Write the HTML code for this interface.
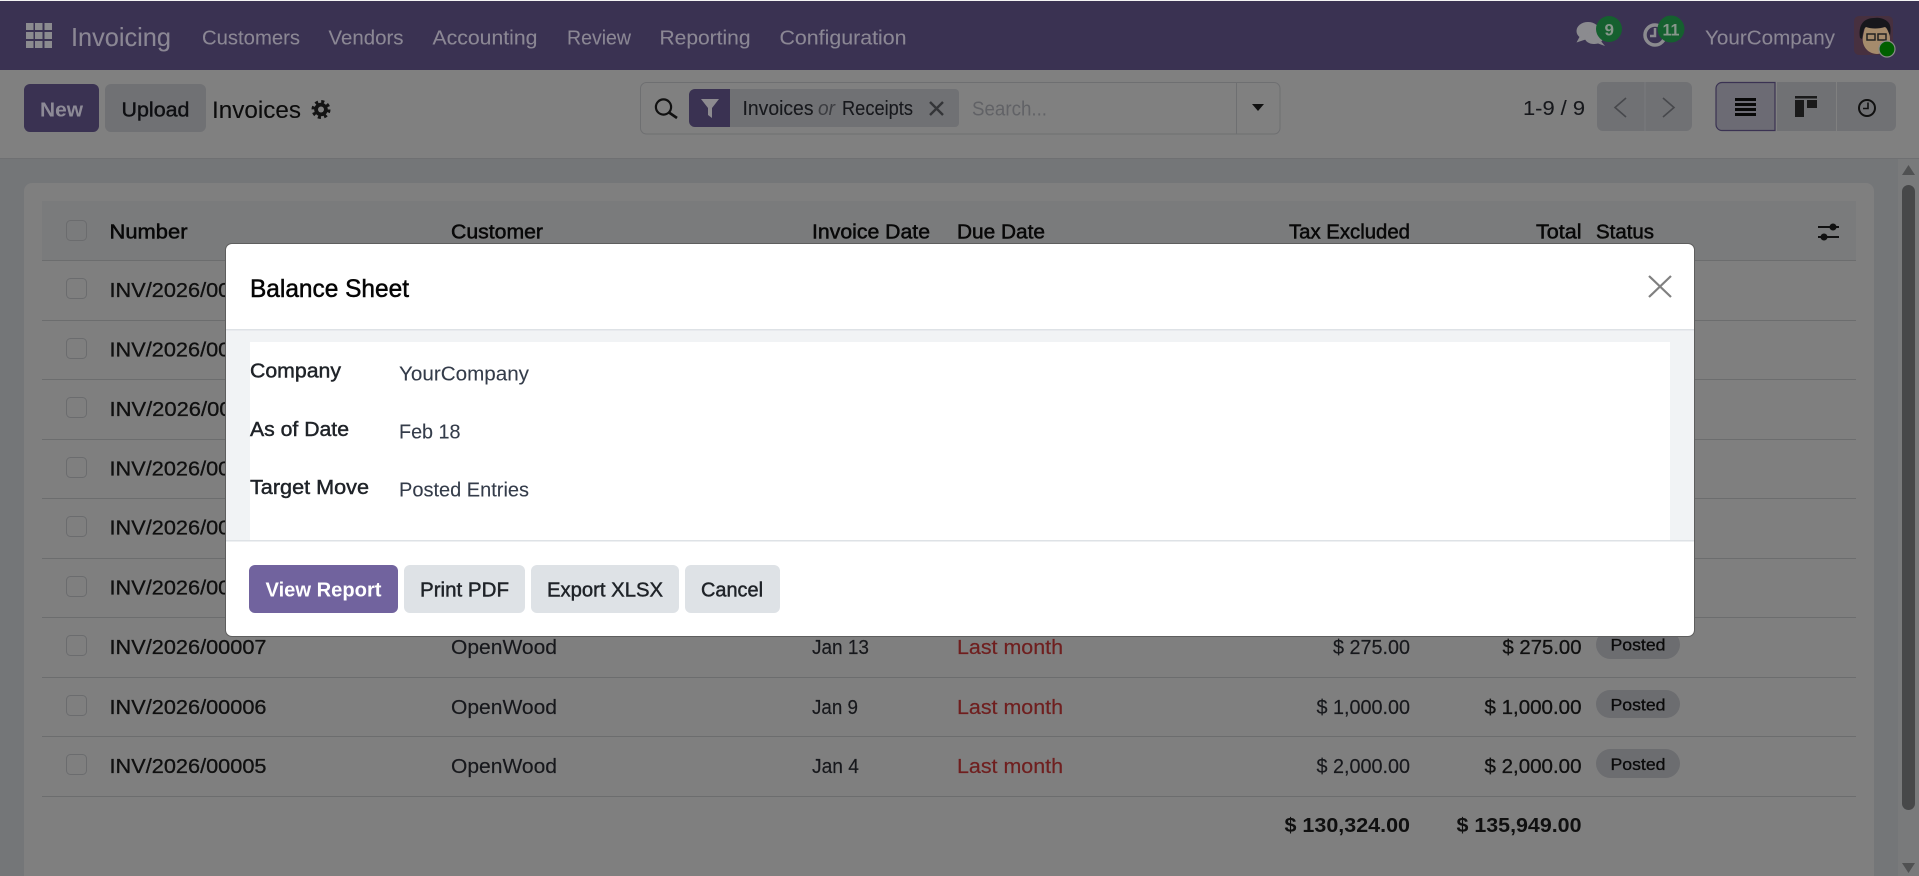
<!DOCTYPE html>
<html lang="en"><head><meta charset="utf-8"><title>Invoices</title>
<style>
html,body{margin:0;padding:0;width:1919px;height:876px;overflow:hidden;background:#747678}
svg{display:block;position:absolute;left:0;top:0}
text{font-family:"Liberation Sans",Arial,sans-serif;font-size:20px;white-space:pre}
.nav{fill:#8b8794;stroke:#8b8794;stroke-width:.1}
.h{fill:#080808;stroke:#080808;stroke-width:.5}
.n{fill:#101010;stroke:#101010;stroke-width:.3}
.r{fill:#17181c;stroke:#17181c;stroke-width:.15}
.d{fill:#6f1f1f;stroke:#6f1f1f;stroke-width:.2}
.b{font-weight:700;fill:#101010}
.p{fill:#0a0a0a;font-size:17px;stroke:#0a0a0a;stroke-width:.3}
.l{fill:#1f2328;stroke:#1f2328;stroke-width:.45}
.v{fill:#343c4a;stroke:#343c4a;stroke-width:.1}
.cb{fill:none;stroke:#6b6c6e;stroke-width:1}
</style></head><body>
<svg width="1919" height="876" viewBox="0 0 1919 876" xmlns="http://www.w3.org/2000/svg">
<rect width="1919" height="876" fill="#747678"/>
<!-- navbar -->
<rect y="0" width="1919" height="1" fill="#f4f4f4"/>
<rect y="1" width="1919" height="69" fill="#3a3252"/>
<!-- grid icon -->
<g fill="#8b8b8f">
<rect x="26" y="23" width="7.5" height="7"/><rect x="35" y="23" width="7.5" height="7"/><rect x="44.500" y="23" width="7.500" height="7"/>
<rect x="26" y="32" width="7.5" height="7"/><rect x="35" y="32" width="7.5" height="7"/><rect x="44.500" y="32" width="7.500" height="7"/>
<rect x="26" y="41" width="7.5" height="7"/><rect x="35" y="41" width="7.5" height="7"/><rect x="44.500" y="41" width="7.500" height="7"/>
</g>
<text x="71" y="46" class="nav" style="font-size:26px" textLength="100" lengthAdjust="spacingAndGlyphs">Invoicing</text>
<text x="202" y="44.500" class="nav" textLength="98" lengthAdjust="spacingAndGlyphs">Customers</text>
<text x="328.500" y="44.500" class="nav" textLength="75" lengthAdjust="spacingAndGlyphs">Vendors</text>
<text x="432.500" y="44.500" class="nav" textLength="105" lengthAdjust="spacingAndGlyphs">Accounting</text>
<text x="567" y="44.500" class="nav" textLength="64" lengthAdjust="spacingAndGlyphs">Review</text>
<text x="659.500" y="44.500" class="nav" textLength="91" lengthAdjust="spacingAndGlyphs">Reporting</text>
<text x="779.500" y="44.500" class="nav" textLength="127" lengthAdjust="spacingAndGlyphs">Configuration</text>
<!-- chat icon -->
<g fill="#8b8b8f">
<ellipse cx="1588" cy="31" rx="11.500" ry="9"/>
<path d="M1580 36l-3.500 6.500 9-3z"/>
<ellipse cx="1594" cy="38" rx="9" ry="6"/>
<path d="M1594 42l11 4-5-6z"/>
</g>
<circle cx="1609" cy="29" r="13" fill="#15602f"/>
<text x="1604.500" y="35.500" style="font-size:17px;font-weight:700;fill:#87968b">9</text>
<!-- activity icon -->
<circle cx="1655" cy="35" r="10" fill="none" stroke="#8b8b8f" stroke-width="3.500"/>
<path d="M1655 28v8h-5" fill="none" stroke="#8b8b8f" stroke-width="2.500"/>
<circle cx="1671" cy="29" r="13.500" fill="#15602f"/>
<text x="1662.500" y="35.500" style="font-size:17px;font-weight:700;fill:#87968b" textLength="17" lengthAdjust="spacingAndGlyphs">11</text>
<text x="1705" y="44.500" class="nav" textLength="130" lengthAdjust="spacingAndGlyphs">YourCompany</text>
<!-- avatar -->
<rect x="1854" y="16" width="39" height="39" rx="5" fill="#47303f"/>
<path d="M1863 36c-2 11 6 18 14 18 8 0 13-7 13-15l-1-12-24 0z" fill="#a58b6c"/>
<path d="M1860 38c-2-12 3-20 14-20 6-1 11 1 14 4 3 3 3 8 2 14-2-5-3-8-5-9-6 2-14 2-19 0-3 2-3 7-4 12z" fill="#17171c"/>
<rect x="1867" y="34" width="8" height="6" fill="none" stroke="#222" stroke-width="1.500"/>
<rect x="1878" y="34" width="8" height="6" fill="none" stroke="#222" stroke-width="1.500"/>
<circle cx="1887" cy="49" r="8" fill="#005f00" stroke="#8a8a8a" stroke-width="1.200"/>
<!-- control panel -->
<rect y="70" width="1919" height="88" fill="#808080"/>
<rect y="158" width="1919" height="1" fill="#6f7072"/>
<rect x="24" y="84" width="75" height="48" rx="6" fill="#3a3252"/>
<text x="40" y="116.500" style="fill:#8d8a96;font-weight:700" textLength="43" lengthAdjust="spacingAndGlyphs">New</text>
<rect x="105" y="84" width="101" height="48" rx="6" fill="#707174"/>
<text x="121.500" y="116.500" style="fill:#0e0f12;stroke:#0e0f12;stroke-width:.4" textLength="68" lengthAdjust="spacingAndGlyphs">Upload</text>
<text x="212" y="118" style="font-size:24px;fill:#0c0c0c;stroke:#0c0c0c;stroke-width:.1" textLength="89" lengthAdjust="spacingAndGlyphs">Invoices</text>
<!-- gear -->
<circle cx="321" cy="109.500" r="6.800" fill="#141414"/>
<circle cx="321" cy="109.500" r="8" fill="none" stroke="#141414" stroke-width="3" stroke-dasharray="3.100 3.180"/>
<circle cx="321" cy="109.500" r="3" fill="#808080"/>
<!-- search -->
<rect x="640.500" y="82.500" width="639.500" height="51.500" rx="6" fill="#808080" stroke="#6e6f71"/>
<line x1="1236.500" y1="82.500" x2="1236.500" y2="134" stroke="#6e6f71"/>
<circle cx="663.500" cy="107" r="7.600" fill="none" stroke="#111" stroke-width="2.200"/>
<line x1="669" y1="112.500" x2="677" y2="118" stroke="#111" stroke-width="2.600"/>
<path d="M689 95a6 6 0 0 1 6-6h260a4 4 0 0 1 4 4v30a4 4 0 0 1-4 4h-260a6 6 0 0 1-6-6z" fill="#707174"/>
<path d="M695 89h35v38h-35a6 6 0 0 1-6-6v-26a6 6 0 0 1 6-6z" fill="#3a3252"/>
<path d="M701 99h18l-7 9v10l-4-3v-7z" fill="#8d8b90"/>
<text x="742.500" y="115" style="fill:#17181c;stroke:#17181c;stroke-width:.1" textLength="71" lengthAdjust="spacingAndGlyphs">Invoices</text>
<text x="818" y="115" style="fill:#3c3d41;font-style:italic" textLength="17" lengthAdjust="spacingAndGlyphs">or</text>
<text x="842" y="115" style="fill:#17181c;stroke:#17181c;stroke-width:.1" textLength="71" lengthAdjust="spacingAndGlyphs">Receipts</text>
<path d="M930 102l13 13M943 102l-13 13" stroke="#343538" stroke-width="2.400"/>
<text x="972" y="115.500" style="fill:#616266" textLength="75" lengthAdjust="spacingAndGlyphs">Search...</text>
<path d="M1252 104h12l-6 7z" fill="#111"/>
<!-- pager -->
<text x="1523" y="115" style="fill:#17181c;stroke:#17181c;stroke-width:.1" textLength="62" lengthAdjust="spacingAndGlyphs">1-9 / 9</text>
<rect x="1597" y="82" width="95" height="49" rx="6" fill="#707174"/>
<line x1="1645" y1="82" x2="1645" y2="131" stroke="#7a7b7e"/>
<path d="M1626 98l-11 9.500 11 9.500M1663 98l11 9.500-11 9.500" fill="none" stroke="#47484c" stroke-width="1.600"/>
<!-- view switch -->
<path d="M1837 82h53a6 6 0 0 1 6 6v37a6 6 0 0 1-6 6h-53z" fill="#707174"/>
<rect x="1777" y="82" width="59" height="49" fill="#707174"/>
<path d="M1775 82.500h-53a6 6 0 0 0-6 6v36a6 6 0 0 0 6 6h53z" fill="#6c6b74" stroke="#3a3252" stroke-width="1.200"/>
<g fill="#080808">
<rect x="1735" y="98" width="21" height="3"/><rect x="1735" y="103" width="21" height="3"/><rect x="1735" y="108" width="21" height="3"/><rect x="1735" y="113" width="21" height="3"/>
<rect x="1795" y="96" width="22" height="2.500" fill="#1a1a1a"/>
<rect x="1795" y="100" width="9" height="17" fill="#1a1a1a"/>
<rect x="1807" y="100" width="10" height="8" fill="#1a1a1a"/>
</g>
<circle cx="1867" cy="108" r="8" fill="none" stroke="#101010" stroke-width="2"/>
<path d="M1868 102.500v6h-5" fill="none" stroke="#101010" stroke-width="1.600"/>
<!-- card -->
<path d="M24 876V191a8 8 0 0 1 8-8h1834a8 8 0 0 1 8 8v685z" fill="#7f7f7f"/>
<rect x="42" y="201" width="1814" height="59" fill="#7a7b7c"/>
<g fill="#6c6d6e">
<rect x="42" y="260" width="1814" height="1"/><rect x="42" y="320" width="1814" height="1"/><rect x="42" y="379" width="1814" height="1"/>
<rect x="42" y="439" width="1814" height="1"/><rect x="42" y="498" width="1814" height="1"/><rect x="42" y="558" width="1814" height="1"/>
<rect x="42" y="617" width="1814" height="1"/><rect x="42" y="677" width="1814" height="1"/><rect x="42" y="736" width="1814" height="1"/><rect x="42" y="796" width="1814" height="1"/>
</g>
<!-- checkboxes -->
<rect class="cb" x="66.500" y="220.500" width="20" height="20" rx="4"/>
<rect class="cb" x="66.500" y="278.500" width="20" height="20" rx="4"/>
<rect class="cb" x="66.500" y="338.500" width="20" height="20" rx="4"/>
<rect class="cb" x="66.500" y="397.500" width="20" height="20" rx="4"/>
<rect class="cb" x="66.500" y="457.500" width="20" height="20" rx="4"/>
<rect class="cb" x="66.500" y="516.500" width="20" height="20" rx="4"/>
<rect class="cb" x="66.500" y="576.500" width="20" height="20" rx="4"/>
<rect class="cb" x="66.500" y="635.500" width="20" height="20" rx="4"/>
<rect class="cb" x="66.500" y="695.500" width="20" height="20" rx="4"/>
<rect class="cb" x="66.500" y="754.500" width="20" height="20" rx="4"/>
<!-- header -->
<text x="109.500" y="238.500" class="h" textLength="78" lengthAdjust="spacingAndGlyphs">Number</text>
<text x="451" y="238.500" class="h" textLength="92" lengthAdjust="spacingAndGlyphs">Customer</text>
<text x="812" y="238.500" class="h" textLength="118" lengthAdjust="spacingAndGlyphs">Invoice Date</text>
<text x="957" y="238.500" class="h" textLength="88" lengthAdjust="spacingAndGlyphs">Due Date</text>
<text x="1289" y="238.500" class="h" textLength="121" lengthAdjust="spacingAndGlyphs">Tax Excluded</text>
<text x="1536" y="238.500" class="h" textLength="45.500" lengthAdjust="spacingAndGlyphs">Total</text>
<text x="1596" y="238.500" class="h" textLength="58" lengthAdjust="spacingAndGlyphs">Status</text>
<path d="M1818 227h21M1818 237h21" stroke="#111" stroke-width="2"/>
<circle cx="1833" cy="227" r="3.500" fill="#111"/><circle cx="1824" cy="237" r="3.500" fill="#111"/>
<!-- rows -->
<text x="109.500" y="297" class="n" textLength="157" lengthAdjust="spacingAndGlyphs">INV/2026/00013</text>
<text x="109.500" y="356.500" class="n" textLength="157" lengthAdjust="spacingAndGlyphs">INV/2026/00012</text>
<text x="109.500" y="416" class="n" textLength="157" lengthAdjust="spacingAndGlyphs">INV/2026/00011</text>
<text x="109.500" y="475.500" class="n" textLength="157" lengthAdjust="spacingAndGlyphs">INV/2026/00010</text>
<text x="109.500" y="534.500" class="n" textLength="157" lengthAdjust="spacingAndGlyphs">INV/2026/00009</text>
<text x="109.500" y="594.500" class="n" textLength="157" lengthAdjust="spacingAndGlyphs">INV/2026/00008</text>
<text x="109.500" y="654" class="n" textLength="157" lengthAdjust="spacingAndGlyphs">INV/2026/00007</text>
<text x="109.500" y="714" class="n" textLength="157" lengthAdjust="spacingAndGlyphs">INV/2026/00006</text>
<text x="109.500" y="773" class="n" textLength="157" lengthAdjust="spacingAndGlyphs">INV/2026/00005</text>
<text x="451" y="654" class="r" textLength="106" lengthAdjust="spacingAndGlyphs">OpenWood</text>
<text x="451" y="714" class="r" textLength="106" lengthAdjust="spacingAndGlyphs">OpenWood</text>
<text x="451" y="773" class="r" textLength="106" lengthAdjust="spacingAndGlyphs">OpenWood</text>
<text x="812" y="654" class="r" textLength="57" lengthAdjust="spacingAndGlyphs">Jan 13</text>
<text x="812" y="714" class="r" textLength="46" lengthAdjust="spacingAndGlyphs">Jan 9</text>
<text x="812" y="773" class="r" textLength="47" lengthAdjust="spacingAndGlyphs">Jan 4</text>
<text x="957" y="654" class="d" textLength="106" lengthAdjust="spacingAndGlyphs">Last month</text>
<text x="957" y="714" class="d" textLength="106" lengthAdjust="spacingAndGlyphs">Last month</text>
<text x="957" y="773" class="d" textLength="106" lengthAdjust="spacingAndGlyphs">Last month</text>
<text x="1333" y="654" class="r" textLength="77" lengthAdjust="spacingAndGlyphs">$ 275.00</text>
<text x="1316.500" y="714" class="r" textLength="93.500" lengthAdjust="spacingAndGlyphs">$ 1,000.00</text>
<text x="1316.500" y="773" class="r" textLength="93.500" lengthAdjust="spacingAndGlyphs">$ 2,000.00</text>
<text x="1502.500" y="654" class="n" textLength="79" lengthAdjust="spacingAndGlyphs">$ 275.00</text>
<text x="1484.500" y="714" class="n" textLength="97" lengthAdjust="spacingAndGlyphs">$ 1,000.00</text>
<text x="1484.500" y="773" class="n" textLength="97" lengthAdjust="spacingAndGlyphs">$ 2,000.00</text>
<rect x="1596" y="630" width="84" height="29" rx="14.500" fill="#6c6d70"/>
<rect x="1596" y="690" width="84" height="28" rx="14" fill="#6c6d70"/>
<rect x="1596" y="749" width="84" height="29" rx="14.500" fill="#6c6d70"/>
<text x="1610.500" y="650.700" class="p" textLength="55" lengthAdjust="spacingAndGlyphs">Posted</text>
<text x="1610.500" y="710.600" class="p" textLength="55" lengthAdjust="spacingAndGlyphs">Posted</text>
<text x="1610.500" y="770" class="p" textLength="55" lengthAdjust="spacingAndGlyphs">Posted</text>
<text x="1284.500" y="832" class="b" textLength="125.500" lengthAdjust="spacingAndGlyphs">$ 130,324.00</text>
<text x="1456.500" y="832" class="b" textLength="125" lengthAdjust="spacingAndGlyphs">$ 135,949.00</text>
<!-- scrollbar -->
<rect x="1898" y="159" width="21" height="717" fill="#797a7b"/>
<rect x="1902" y="185" width="13" height="625" rx="6.500" fill="#474849"/>
<path d="M1908.500 165l6.500 10h-13z" fill="#505152"/>
<path d="M1902 863h13l-6.500 10z" fill="#505152"/>
<!-- modal -->
<rect x="225" y="243" width="1470" height="394" rx="7" fill="#5e5e5e"/>
<rect x="226" y="244" width="1468" height="392" rx="6" fill="#ffffff"/>
<rect x="226" y="330" width="1468" height="210" fill="#f1f3f5"/>
<rect x="226" y="329" width="1468" height="1.500" fill="#dee2e6"/>
<rect x="250" y="342" width="1420" height="198" fill="#ffffff"/>
<rect x="226" y="540" width="1468" height="1.500" fill="#dee2e6"/>
<text x="250" y="297" style="font-size:25px;fill:#050505;stroke:#050505;stroke-width:.5" textLength="159" lengthAdjust="spacingAndGlyphs">Balance Sheet</text>
<path d="M1649 276l22 21M1671 276l-22 21" stroke="#808080" stroke-width="2.200"/>
<text x="250" y="377.700" class="l" textLength="91" lengthAdjust="spacingAndGlyphs">Company</text>
<text x="250" y="436" class="l" textLength="99" lengthAdjust="spacingAndGlyphs">As of Date</text>
<text x="250" y="494" class="l" textLength="119" lengthAdjust="spacingAndGlyphs">Target Move</text>
<text x="399" y="380.600" class="v" textLength="130" lengthAdjust="spacingAndGlyphs">YourCompany</text>
<text x="399" y="438.500" class="v" textLength="61.500" lengthAdjust="spacingAndGlyphs">Feb 18</text>
<text x="399" y="496.500" class="v" textLength="130" lengthAdjust="spacingAndGlyphs">Posted Entries</text>
<rect x="249" y="565" width="149" height="48" rx="6" fill="#71639e"/>
<text x="265.500" y="596.700" style="fill:#fff;font-weight:700" textLength="116" lengthAdjust="spacingAndGlyphs">View Report</text>
<rect x="404" y="565" width="121" height="48" rx="6" fill="#dee2e6"/>
<text x="420" y="596.700" class="l" textLength="89" lengthAdjust="spacingAndGlyphs">Print PDF</text>
<rect x="531" y="565" width="148" height="48" rx="6" fill="#dee2e6"/>
<text x="547" y="596.700" class="l" textLength="116" lengthAdjust="spacingAndGlyphs">Export XLSX</text>
<rect x="685" y="565" width="95" height="48" rx="6" fill="#dee2e6"/>
<text x="701" y="596.700" class="l" textLength="62" lengthAdjust="spacingAndGlyphs">Cancel</text>
</svg>
</body></html>
